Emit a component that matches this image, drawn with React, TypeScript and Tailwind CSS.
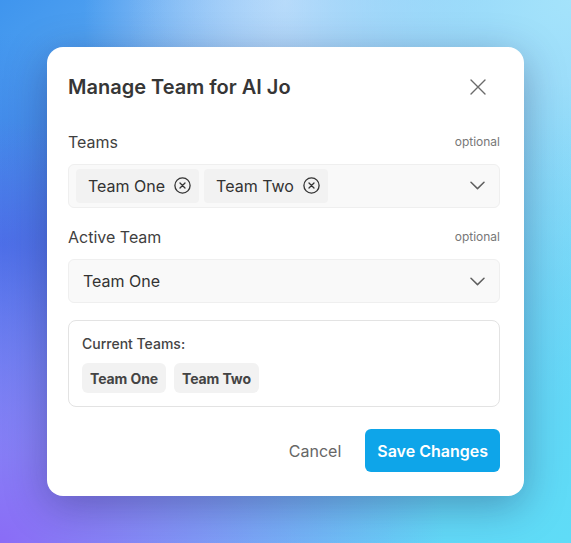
import React from "react";

function CloseIcon() {
  return (
    <svg width="16" height="16" viewBox="0 0 16 16" fill="none" stroke="#6b6b6b" strokeWidth="1.4" strokeLinecap="round">
      <path d="M1 1L15 15M15 1L1 15" />
    </svg>
  );
}

function Chevron() {
  return (
    <svg width="15" height="9" viewBox="0 0 15 9" fill="none" stroke="#5f5f5f" strokeWidth="1.5" strokeLinecap="round" strokeLinejoin="round">
      <path d="M1 1.2L7.5 7.6L14 1.2" />
    </svg>
  );
}

function CircleX() {
  return (
    <svg width="17" height="17" viewBox="0 0 17 17" fill="none" stroke="#333" strokeWidth="1.3" strokeLinecap="round">
      <circle cx="8.5" cy="8.5" r="7.6" />
      <path d="M6 6L11 11M11 6L6 11" />
    </svg>
  );
}

function Chip({ label }: { label: string }) {
  return (
    <div className="flex h-[34px] items-center gap-[9px] rounded-[4px] bg-[#f2f2f2] pl-[12px] pr-[8px]">
      <span className="text-[16px] text-[#333]">{label}</span>
      <CircleX />
    </div>
  );
}

function Badge({ label }: { label: string }) {
  return (
    <div className="flex h-[30px] items-center rounded-[6px] bg-[#f2f2f2] px-[8px] text-[14px] font-bold tracking-[-0.1px] text-[#444]">
      {label}
    </div>
  );
}

function Label({ text }: { text: string }) {
  return (
    <div className="flex h-[24px] items-center justify-between">
      <span className="text-[16px] text-[#3f3f3f]">{text}</span>
      <span className="text-[12px] text-[#777]">optional</span>
    </div>
  );
}

export default function App() {
  return (
    <div
      className="flex h-[543px] w-[571px] items-center justify-center overflow-hidden bg-[radial-gradient(ellipse_at_0%_100%,#8a6cf6_0%,transparent_55%),radial-gradient(ellipse_at_100%_100%,#5fdcf7_0%,transparent_60%),radial-gradient(ellipse_at_0%_45%,#3470e2_0%,transparent_50%),radial-gradient(ellipse_at_100%_0%,#a4e3fb_0%,transparent_55%),radial-gradient(ellipse_at_50%_0%,#c2d6fa_0%,transparent_50%),linear-gradient(135deg,#3f95ee_0%,#84c6f7_50%,#62d3f7_100%)]"
      style={{ fontFamily: "Inter, 'Noto Sans', sans-serif" }}
    >
      <div className="flex h-[449px] w-[477px] flex-col rounded-[16px] bg-white pb-[24px] pl-[21px] pr-[24px] pt-[26px] shadow-[0_10px_40px_rgba(30,30,80,0.35)]">
        <div className="flex h-[28px] items-center justify-between">
          <h2 className="text-[20px] font-semibold text-[#363636]">Manage Team for AI Jo</h2>
          <div className="mr-[14px]">
            <CloseIcon />
          </div>
        </div>

        <div className="mt-[29px]">
          <Label text="Teams" />
        </div>
        <div className="mt-[10px] flex h-[44px] items-center justify-between rounded-[6px] border border-[#efefef] bg-[#f9f9f9] pl-[7px] pr-[14px]">
          <div className="flex gap-[5px]">
            <Chip label="Team One" />
            <Chip label="Team Two" />
          </div>
          <Chevron />
        </div>

        <div className="mt-[17px]">
          <Label text="Active Team" />
        </div>
        <div className="mt-[10px] flex h-[45px] items-center justify-between rounded-[6px] border border-[#efefef] bg-[#f9f9f9] pl-[14px] pr-[14px]">
          <span className="text-[16px] text-[#333]">Team One</span>
          <Chevron />
        </div>

        <div className="mt-[17px] flex h-[87px] flex-col rounded-[8px] border border-[#e3e3e3] px-[13px] pt-[13px]">
          <div className="text-[14px] font-medium leading-[20px] text-[#444]">Current Teams:</div>
          <div className="mt-[9px] flex gap-[8px]">
            <Badge label="Team One" />
            <Badge label="Team Two" />
          </div>
        </div>

        <div className="mt-[22px] flex items-center justify-end gap-[8px]">
          <button className="h-[43px] px-[16px] text-[16px] text-[#666]">Cancel</button>
          <button className="h-[43px] rounded-[6px] bg-[#0ea5e9] px-[12px] text-[16px] font-semibold text-white">Save Changes</button>
        </div>
      </div>
    </div>
  );
}
